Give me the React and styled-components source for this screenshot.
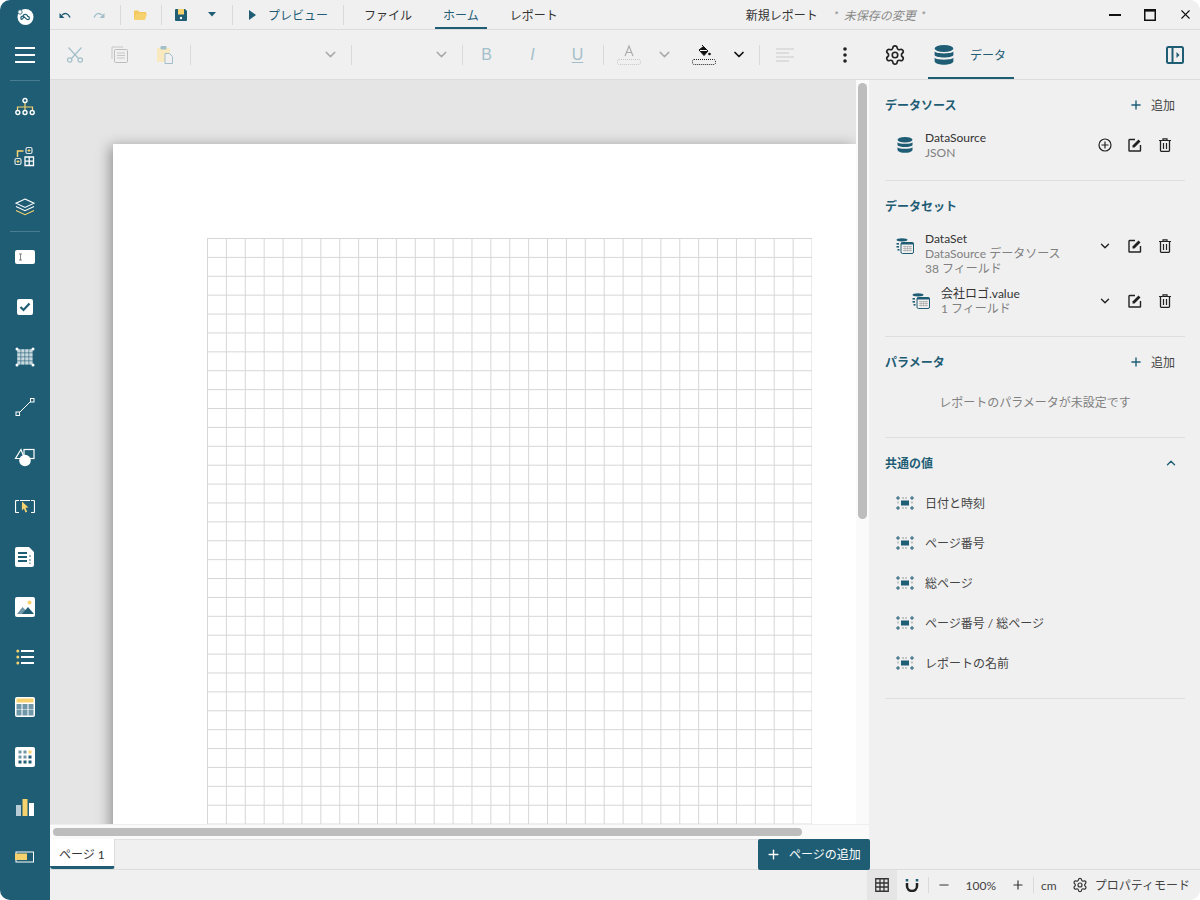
import React from "react";
import styled, { createGlobalStyle } from "styled-components";
import { Settings, Plus, Minus, X, ChevronDown, ChevronUp } from "lucide-react";

const TEAL = "#1f5d75";
const YELLOW = "#f6d26f";
const FADED = "#a3bfca";
const FONT = `Lato, "Noto Sans CJK JP", "Noto Sans", sans-serif`;

const Global = createGlobalStyle`
  html, body { margin: 0; padding: 0; background: #fff; }
  #root { width: 1200px; height: 900px; }
  * { box-sizing: border-box; }
`;

const Window = styled.div`
  width: 1200px; height: 900px; display: flex; overflow: hidden;
  border-radius: 10px; background: #f0f0f0; color: #333;
  font: 12px/15px ${FONT};
`;
const Sidebar = styled.nav`
  width: 50px; flex: none; background: ${TEAL}; display: flex; flex-direction: column;
`;
const Logo = styled.div`height: 30px; display: flex; align-items: center; justify-content: center;`;
const SideItem = styled.div`height: 50px; flex: none; display: flex; align-items: center; justify-content: center;`;
const SideRule = styled.div`
  height: 1px; flex: none; margin: ${p => p.$first ? "0 10px 1px" : "-1px 10px 0"}; background: #4a7d92;
`;
const Main = styled.div`flex: 1; min-width: 0; display: flex; flex-direction: column;`;
const TitleBar = styled.header`
  height: 30px; flex: none; display: flex; align-items: center; border-bottom: 1px solid #dcdcdc;
`;
const TitleBtn = styled.div`
  width: ${p => p.$w}px; height: 29px; flex: none; display: flex; align-items: center; justify-content: center;
`;
const Sep = styled.div`
  width: 1px; height: ${p => p.$h || 20}px; flex: none; margin-left: ${p => p.$ml || 0}px; background: #d9d9d9;
`;
const PreviewBtn = styled.div`
  margin-left: 14px; display: flex; align-items: center; gap: 11px; color: ${TEAL}; width: 96px; flex: none;
`;
const NudgedLabel = styled.span`padding-top: 2px;`;
const MenuTabs = styled.div`display: flex; gap: 15px; margin-left: 12px; height: 29px;`;
const MenuTab = styled.div`
  padding: 4px 8px 0; display: flex; align-items: center; height: 29px;
  color: ${p => p.$active ? TEAL : "#333"};
  border-bottom: 2px solid ${p => p.$active ? TEAL : "transparent"};
`;
const DocTitle = styled.div`margin-left: 180px; padding-top: 2px; color: #333; white-space: nowrap;`;
const Unsaved = styled.div`margin-left: 16px; padding-top: 1px; color: #888; font-style: italic; white-space: nowrap; word-spacing: 2.5px;`;
const WinControls = styled.div`margin-left: auto; display: flex; gap: 5px;`;

const Toolbar = styled.div`
  height: 50px; flex: none; display: flex; align-items: center; padding-left: 2px; border-bottom: 1px solid #dcdcdc;
`;
const ToolBtn = styled.div`
  width: ${p => p.$w || 45}px; margin-left: ${p => p.$ml || 0}px; height: 49px; flex: none;
  display: flex; align-items: center; justify-content: center;
`;
const Combo = styled.div`
  width: ${p => p.$w}px; height: 49px; flex: none; display: flex; align-items: center; justify-content: flex-end; padding-right: 12px;
`;
const DataTab = styled.div`
  width: 86px; height: 49px; margin-left: 11px; flex: none; display: flex; align-items: center; gap: 16px; padding: 2px 0 0 6px;
  color: ${TEAL}; border-bottom: 2px solid ${TEAL};
`;
const Body = styled.div`flex: 1; min-height: 0; display: flex;`;
const Work = styled.div`width: 819px; flex: none; display: flex; flex-direction: column; position: relative;`;
const CanvasRow = styled.div`height: 744px; flex: none; display: flex;`;
const Canvas = styled.div`
  width: 806px; flex: none; overflow: hidden; background: #e5e5e5; padding: 64px 0 0 63px;
`;
const Page = styled.div`
  width: 743px; height: 800px; background: #fff; padding: 94px 0 0 94px;
  box-shadow: -3px 2px 13px rgba(0,0,0,.36);
`;
const Grid = styled.div`
  width: 605px; height: 700px;
  background-image:
    linear-gradient(to right, #d6d6d6 1px, transparent 1px),
    linear-gradient(to bottom, #d6d6d6 1px, transparent 1px);
  background-size: 18.9px 18.9px;
`;
const VTrack = styled.div`flex: 1; background: #fafafa; padding: 3px 2px 0;`;
const VThumb = styled.div`height: 436px; border-radius: 5px; background: #bdbdbd;`;
const HTrack = styled.div`height: 15px; flex: none; background: #fafafa; padding: 3px 0 0 3px; border-top: 1px solid #eee;`;
const HThumb = styled.div`width: 749px; height: 8px; border-radius: 4px; background: #bdbdbd;`;
const TabStrip = styled.div`
  flex: 1; display: flex; justify-content: space-between; border-top: 1px solid #e0e0e0; 
`;
const PageTab = styled.div`
  width: 65px; height: 30px; margin-top: -1px; padding: 3px 0 0 9px; display: flex; align-items: center;
  background: #fff; color: #333; border-bottom: 3px solid ${TEAL}; border-right: 1px solid #ddd;
  border-radius: 0 0 3px 3px; white-space: pre;
`;
const AddPage = styled.div`
  width: 112px; height: 31px; margin: -1px -1px 0 0; display: flex; align-items: center; gap: 8px; padding-left: 8px;
  background: ${TEAL}; color: #fff; border-radius: 2px; position: relative; z-index: 1;
`;
const Panel = styled.aside`flex: 1; min-width: 0; padding: 0 15px 0 16px;`;
const Section = styled.section`
  padding-bottom: ${p => p.$pb ?? 20}px; border-bottom: 1px solid #dedede;
`;
const SectionHead = styled.div`height: 50px; display: flex; align-items: center; justify-content: space-between;`;
const SectionTitle = styled.h3`margin: 0; font: 700 12px/15px ${FONT}; color: ${TEAL};`;
const AddBtn = styled.div`display: flex; align-items: center; gap: 8px; padding-right: 10px; color: #444;`;
const Chevron = styled.div`padding-right: 7px; display: flex;`;
const TreeItem = styled.div`
  display: flex; align-items: flex-start; padding-left: ${p => p.$indent || 0}px; margin-top: ${p => p.$mt || 0}px;
`;
const ItemIcon = styled.div`
  width: 40px; height: 30px; flex: none; display: flex; align-items: center; justify-content: center;
`;
const ItemText = styled.div`flex: 1; min-width: 0;`;
const Name = styled.div`color: #333;`;
const Meta = styled.div`color: #808080;`;
const Actions = styled.div`display: flex; padding-right: 5px; height: 30px;`;
const Action = styled.div`width: 30px; height: 30px; display: flex; align-items: center; justify-content: center;`;
const EmptyNote = styled.div`height: 30px; display: flex; align-items: center; justify-content: center; color: #808080;`;
const ValueList = styled.div`margin-top: -5px;`;
const ValueRow = styled.div`height: 40px; display: flex; align-items: center; color: #444;`;
const StatusBar = styled.footer`
  height: 31px; flex: none; display: flex; align-items: center; justify-content: flex-end; padding-right: 10px;
  border-top: 1px solid #dcdcdc; color: #444;
`;
const StatusBtn = styled.div`
  width: ${p => p.$w || 30}px; height: 30px; flex: none; display: flex; align-items: center; justify-content: center;
  margin-left: ${p => p.$ml || 0}px; background: ${p => p.$on ? "#e5e5e5" : "transparent"};
`;
const StatusText = styled.div`flex: none; margin-left: ${p => p.$ml || 0}px; white-space: nowrap;`;
const Glyph = styled.span`
  font: ${p => p.$i ? "italic 400" : "400"} 16px/18px "Liberation Sans", sans-serif;
  color: #a3bfca;
  ${p => p.$u && "text-decoration: underline; text-underline-offset: 2px;"}
`;
const Svg = styled.svg`display: block; flex: none;`;

const Ic = ({ w = 20, h = 20, children }) => <Svg width={w} height={h} viewBox={`0 0 ${w} ${h}`}>{children}</Svg>;

/* sidebar drawings */
const LogoIc = () => <Ic w={24} h={24}>
  <circle cx="12.5" cy="14" r="8" fill="#fff" />
  <circle cx="7" cy="9" r="2.200" fill="#fff" stroke={TEAL} strokeWidth=".8" />
  <path d="M8 16c-.6-2 .8-3 2-2.800.6-2.400 4.200-2.400 4.800.2 2 0 2.200 3.200 0 3.300-1.400 0-2.800-2.400-3.800-3-1 1.200-1.600 3.400-3 2.300z" fill="none" stroke={TEAL} strokeWidth="1.200" />
</Ic>;
const Burger = () => <Ic w={20} h={16}>
  <rect y="0" width="20" height="2" fill="#fff" /><rect y="7" width="20" height="2" fill="#fff" /><rect y="14" width="20" height="2" fill="#fff" />
</Ic>;
const Tree = () => <Ic w={20} h={20}>
  <path d="M10 5v5M2.500 14v-4h15v4M10 10v4" fill="none" stroke={YELLOW} strokeWidth="1.200" />
  <g fill={TEAL} stroke="#fff" strokeWidth="1.400">
    <circle cx="10" cy="3.500" r="2" /><circle cx="2.800" cy="15.500" r="2" /><circle cx="10" cy="15.500" r="2" /><circle cx="17.200" cy="15.500" r="2" />
  </g>
</Ic>;
const Compose = () => <Ic w={22} h={22}>
  <path d="M3.500 11V5h6" fill="none" stroke={YELLOW} strokeWidth="1.500" />
  <rect x="12" y="1.500" width="6" height="6" rx="1.500" fill="none" stroke="#dfe8ec" strokeWidth="1.200" />
  <path d="M15 3v3M13.500 4.500h3" stroke={YELLOW} strokeWidth="1" />
  <rect x="1" y="12.500" width="6" height="6" rx="1.500" fill="none" stroke="#dfe8ec" strokeWidth="1.200" />
  <path d="M4 14v3M2.500 15.500h3" stroke={YELLOW} strokeWidth="1" />
  <path d="M11 11h8.500v8.500H11zM15.200 11v8.500M11 15.200h8.500" fill="none" stroke="#fff" strokeWidth="1.300" />
</Ic>;
const Layers = () => <Ic w={20} h={18}>
  <path d="M10 1l9 4.200-9 4.200-9-4.200z" fill="none" stroke="#fff" strokeWidth="1.100" />
  <path d="M1 8.500l9 4.200 9-4.200" fill="none" stroke="#fff" strokeWidth="1.100" />
  <path d="M1 12.500l9 4.200 9-4.200" fill="none" stroke={YELLOW} strokeWidth="1.100" />
</Ic>;
const TextBox = () => <Ic w={20} h={14}>
  <rect width="20" height="14" rx="2" fill="#fff" />
  <path d="M4 4h3M4 10h3M5.500 4v6" stroke="#777" strokeWidth=".9" fill="none" />
</Ic>;
const Check = () => <Ic w={16} h={16}>
  <rect width="16" height="16" rx="2" fill="#fff" />
  <path d="M3.500 8l3 3 6-6.500" fill="none" stroke={TEAL} strokeWidth="2.200" />
</Ic>;
const TableSel = () => {
  const c = [];
  for (let x = 0; x < 4; x++) for (let y = 0; y < 4; y++) c.push(<rect key={`${x}${y}`} x={2.200 + x * 4} y={2.200 + y * 4} width="3.400" height="3.400" fill="#c9d9df" />);
  return <Ic w={20} h={20}>{c}
    {[[2, 2], [18, 2], [2, 18], [18, 18]].map(([x, y]) => <circle key={x + "" + y} cx={x} cy={y} r="1.500" fill="#fff" />)}
  </Ic>;
};
const LineIc = () => <Ic w={20} h={20}>
  <path d="M3 17L17 3" stroke="#fff" strokeWidth="1" />
  <rect x="1" y="15" width="3.500" height="3.500" fill={TEAL} stroke="#fff" />
  <rect x="15.500" y="1.500" width="3.500" height="3.500" fill={TEAL} stroke="#fff" />
</Ic>;
const Shapes = () => <Ic w={22} h={20}>
  <path d="M7 2.500L1.500 11.500h9z" fill="none" stroke="#fff" strokeWidth="1.200" />
  <rect x="10" y="2.500" width="10" height="9" fill="none" stroke="#fff" strokeWidth="1.200" />
  <circle cx="11" cy="13.500" r="5.800" fill="#fff" />
</Ic>;
const ClickArea = () => <Ic w={20} h={16}>
  <path d="M4 1.500H1.500q-1 0-1 1v10q0 1 1 1H4M16 1.500h2.500q1 0 1 1v10q0 1-1 1H16M5 1.500h10" fill="none" stroke="#fff" strokeWidth="1.200" />
  <path d="M7 2.500l6.500 6-3 .3 1.700 4-1.700.7-1.600-4-2 2z" fill={YELLOW} />
</Ic>;
const Doc = () => <Ic w={20} h={20}>
  <path d="M2 0h12l5 5v13a2 2 0 0 1-2 2H2a2 2 0 0 1-2-2V2a2 2 0 0 1 2-2z" fill="#fff" />
  <path d="M3 6h9M3 10h9M3 14h9" stroke={TEAL} strokeWidth="2" />
  <path d="M15 8v2M15 12v2M15 15.500v1.500" stroke="#9db6c1" strokeWidth="2" />
</Ic>;
const Picture = () => <Ic w={20} h={20}>
  <rect width="20" height="20" rx="2" fill="#fff" />
  <circle cx="14.500" cy="5.500" r="2" fill={YELLOW} />
  <path d="M2 17l5.500-7 4 4-2.500 3z" fill="#6f97a8" />
  <path d="M7 17l6-7 6 7z" fill={TEAL} />
</Ic>;
const ListIc = () => <Ic w={18} h={16}>
  {[2, 8, 14].map(y => <g key={y}><circle cx="1.800" cy={y} r="1.500" fill={YELLOW} /><rect x="5" y={y - 1} width="13" height="2" fill="#fff" /></g>)}
</Ic>;
const TableIc = () => <Ic w={20} h={20}>
  <rect width="20" height="20" rx="2" fill="#fff" />
  <rect x="1.500" y="1.500" width="17" height="4" fill={YELLOW} />
  {[1.500, 7.500, 13.500].map(x => [7, 13].map(y => <rect key={x + "-" + y} x={x} y={y} width="5" height="5.500" fill="#6f97a8" />))}
</Ic>;
const Dots = () => <Ic w={20} h={20}>
  <rect width="20" height="20" rx="2" fill="#fff" />
  {[3.500, 8.500, 13.500].map((x, i) => [3.500, 8.500, 13.500].map((y, j) => (
    <rect key={x + "-" + y} x={x} y={y} width="3" height="3"
      fill={j === 0 && i === 2 ? YELLOW : j === 2 || (j === 1 && i === 2) ? TEAL : "#6f97a8"} />
  )))}
</Ic>;
const Bars = () => <Ic w={20} h={20}>
  <rect x="1" y="8" width="5" height="11" fill="#b8ccd5" />
  <rect x="7.500" y="2" width="5" height="17" fill={YELLOW} />
  <rect x="14" y="6" width="5" height="13" fill="#fff" />
</Ic>;
const Strip = () => <Ic w={20} h={12}>
  <rect x="1" y="1" width="17.500" height="10" fill="none" stroke="#fff" strokeWidth="1" />
  <rect y="2.500" width="12" height="6.500" fill={YELLOW} />
</Ic>;

/* title bar drawings */
const Undo = ({ c = TEAL, flip }) => <Ic w={12} h={10}>
  <g transform={flip ? "translate(12 0) scale(-1 1)" : undefined}>
    <path d="M3 5c3-2.500 6-2 8 2.500" fill="none" stroke={c} strokeWidth="1.500" />
    <path d="M0.500 3v5h5z" fill={c} />
  </g>
</Ic>;
const Folder = () => <Ic w={14} h={12}>
  <path d="M1 11V1.500h4l1.500 1.500H13v2H4z" fill="#f3c85f" />
  <path d="M1 11l2.500-6.500H14L12 11z" fill={YELLOW} />
</Ic>;
const Save = () => <Ic w={12} h={12}>
  <path d="M0 1a1 1 0 0 1 1-1h9l2 2v9a1 1 0 0 1-1 1H1a1 1 0 0 1-1-1z" fill={TEAL} />
  <rect x="3" y="0" width="6" height="5.500" fill={YELLOW} />
  <circle cx="6" cy="9" r="1.200" fill="#fff" />
</Ic>;
const Caret = () => <Ic w={8} h={5}><path d="M0 0h8L4 4.500z" fill={TEAL} /></Ic>;
const Play = () => <Ic w={10} h={10}><path d="M2 0l7 5-7 5z" fill={TEAL} /></Ic>;
const WinMin = () => <Ic w={12} h={12}><rect y="5" width="12" height="2" fill="#111" /></Ic>;
const WinMax = () => <Ic w={12} h={12}><path d="M.75 1.500h10.500v9.750H.75z" fill="none" stroke="#111" strokeWidth="1.500" /><rect x="0" y="0" width="12" height="2.500" fill="#111" /></Ic>;

/* toolbar drawings */
const Cut = () => <Ic w={18} h={18}>
  <path d="M2.500 1.500l10 11M15.500 1.500l-10 11" stroke="#a3bfca" strokeWidth="1.200" fill="none" />
  <circle cx="3.700" cy="14" r="2.200" fill="none" stroke="#a3bfca" strokeWidth="1.200" />
  <circle cx="14.300" cy="14" r="2.200" fill="none" stroke="#a3bfca" strokeWidth="1.200" />
</Ic>;
const Copy = () => <Ic w={18} h={18}>
  <path d="M1 13V1h11" fill="none" stroke="#c6c6c6" strokeWidth="1" />
  <rect x="3.500" y="3.500" width="13" height="13" rx="1" fill="none" stroke="#bdbdbd" strokeWidth="1" />
  <path d="M6 7h8M6 9.500h8M6 12h8" stroke="#c6c6c6" strokeWidth="1" />
</Ic>;
const Paste = () => <Ic w={18} h={20}>
  <rect x="1" y="3" width="13" height="14" rx="1" fill="#f8e9bf" />
  <rect x="4.500" y="1" width="6" height="3.500" rx="1" fill="#a3bfca" />
  <path d="M9 8.500h4.500l3 3v7H9z" fill="#f0f0f0" stroke="#a3bfca" strokeWidth="1" />
</Ic>;
const FontColor = () => <Ic w={24} h={22}>
  <path d="M8 12l4-10 4 10M9.500 8.500h5" fill="none" stroke="#aaa" strokeWidth="1.100" />
  <rect x=".5" y="15.500" width="23" height="5" rx="1.500" fill="none" stroke="#c6c6c6" strokeDasharray="1 1" />
</Ic>;
const Fill = () => <Ic w={24} h={22}>
  <path d="M10 1l1.500 1.500M7 6l4.500-3.500L16 7l-4 4.500z" fill="#111" stroke="#111" strokeWidth="1" />
  <path d="M8 6.500h7" stroke="#f0f0f0" strokeWidth="1" />
  <circle cx="17.500" cy="10" r="1.300" fill="#111" />
  <rect x=".5" y="15.500" width="23" height="5" rx="1.500" fill="none" stroke="#222" strokeDasharray="1 1" />
</Ic>;
const Align = () => <Ic w={18} h={14}>
  <path d="M0 1h18M0 5h13M0 9h18M0 13h13" stroke="#c9c9c9" strokeWidth="1" />
</Ic>;
const More = () => <Ic w={4} h={16}>
  <circle cx="2" cy="2" r="1.800" fill="#222" /><circle cx="2" cy="8" r="1.800" fill="#222" /><circle cx="2" cy="14" r="1.800" fill="#222" />
</Ic>;
const Db = ({ s = 16 }) => <Svg width={s} height={s} viewBox="0 0 16 16">
  <ellipse cx="8" cy="2.800" rx="7.500" ry="2.800" fill={TEAL} />
  <path d="M.5 5.200c1.500 2 13.500 2 15 0v3c-1.500 2.400-13.500 2.400-15 0z" fill={TEAL} />
  <path d="M.5 10.200c1.500 2 13.500 2 15 0v3c-1.500 3.400-13.500 3.400-15 0z" fill={TEAL} />
</Svg>;
const PanelToggle = () => <Ic w={18} h={18}>
  <rect x="1" y="1" width="16" height="16" rx="1.500" fill="none" stroke={TEAL} strokeWidth="2" />
  <path d="M6.500 1v16" stroke={TEAL} strokeWidth="2" />
  <path d="M10.500 6l3 3-3 3z" fill={TEAL} />
</Ic>;

/* panel drawings */
const AddCircle = () => <Ic w={14} h={14}>
  <circle cx="7" cy="7" r="6" fill="none" stroke="#222" strokeWidth="1.200" />
  <path d="M7 3.500v7M3.500 7h7" stroke="#222" strokeWidth="1.200" />
</Ic>;
const Edit = () => <Ic w={14} h={14}>
  <path d="M7 1.500H1.500a.5.5 0 0 0-.5.5v10.500a.5.5 0 0 0 .5.5H12a.5.5 0 0 0 .5-.5V7" fill="none" stroke="#222" strokeWidth="1.400" />
  <path d="M4.500 9.500V7.500L10.500 1.500l2 2L6.500 9.500z" fill="#222" />
</Ic>;
const Trash = () => <Ic w={12} h={14}>
  <path d="M0 2.500h12M4 2V.8h4V2" fill="none" stroke="#222" strokeWidth="1.200" />
  <path d="M1.500 2.500v10a.8.8 0 0 0 .8.8h7.400a.8.8 0 0 0 .8-.8v-10" fill="none" stroke="#222" strokeWidth="1.300" />
  <path d="M4.500 5v6M7.500 5v6" stroke="#222" strokeWidth="1.200" />
</Ic>;
const DataSetIc = () => <Ic w={18} h={16}>
  <ellipse cx="6" cy="1.800" rx="5.500" ry="1.600" fill={TEAL} />
  <rect x=".5" y="5" width="2.500" height="1.600" fill={TEAL} />
  <rect x=".5" y="8" width="2.500" height="1.600" fill={TEAL} />
  <rect x="1.500" y="11" width="2" height="1.600" fill={TEAL} />
  <rect x="5" y="4.500" width="12.500" height="11" rx="1.500" fill="#f0f0f0" stroke={TEAL} strokeWidth="1" />
  <rect x="5" y="4.500" width="12.500" height="2" fill={TEAL} />
  <path d="M7 8.500h9M7 10.500h9M7 12.500h9M9 8v5.500M11.500 8v5.500M14 8v5.500" stroke="#a9a9a9" strokeWidth=".7" />
</Ic>;
const ValueIc = () => <Ic w={18} h={14}>
  <path d="M2 0v4M0 2h4M16 0v4M14 2h4M2 10v4M0 12h4M16 10v4M14 12h4" stroke={TEAL} strokeWidth="1" />
  <path d="M6 2h6M6 12h6M2 5.500v3M16 5.500v3" stroke="#999" strokeWidth="1" strokeDasharray="2 1" />
  <rect x="5" y="4.500" width="8" height="5" fill={TEAL} />
</Ic>;

/* status drawings */
const GridIc = () => <Ic w={14} h={14}>
  <path d="M.75.75h12.500v12.500H.75zM5 .75v12.500M9 .75v12.500M.75 5h12.500M.75 9h12.500" fill="none" stroke="#333" strokeWidth="1.300" />
</Ic>;
const Magnet = () => <Ic w={14} h={14}>
  <path d="M2 5v3a5 5 0 0 0 10 0V5" fill="none" stroke="#222" strokeWidth="2.500" />
  <path d="M.75 1h2.500v2.500H.75zM10.750 1h2.500v2.500h-2.500z" fill={TEAL} />
</Ic>;

const sideItems = [Tree, Compose, Layers];
const sideItems2 = [TextBox, Check, TableSel, LineIc, Shapes, ClickArea, Doc, Picture, ListIc, TableIc, Dots, Bars, Strip];

const DataActions = ({ first }) => (
  <Actions>
    <Action>{first}</Action>
    <Action><Edit /></Action>
    <Action><Trash /></Action>
  </Actions>
);
const Down = () => <ChevronDown size={14} strokeWidth={2.4} color="#222" />;
const Add = () => (
  <AddBtn><Plus size={14} strokeWidth={2.4} color={TEAL} />追加</AddBtn>
);

export default function App() {
  return (
    <>
      <Global />
      <Window>
        <Sidebar>
          <Logo><LogoIc /></Logo>
          <SideItem><Burger /></SideItem>
          <SideRule $first />
          {sideItems.map((C, i) => <SideItem key={i}><C /></SideItem>)}
          <SideRule />
          {sideItems2.map((C, i) => <SideItem key={i}><C /></SideItem>)}
        </Sidebar>
        <Main>
          <TitleBar>
            <TitleBtn $w={30}><Undo /></TitleBtn>
            <TitleBtn $w={38}><Undo c={FADED} flip /></TitleBtn>
            <Sep $ml={2} />
            <TitleBtn $w={38}><Folder /></TitleBtn>
            <Sep $ml={2} />
            <TitleBtn $w={38}><Save /></TitleBtn>
            <TitleBtn $w={24}><Caret /></TitleBtn>
            <Sep $ml={8} />
            <PreviewBtn><Play /><NudgedLabel>プレビュー</NudgedLabel></PreviewBtn>
            <Sep />
            <MenuTabs>
              <MenuTab>ファイル</MenuTab>
              <MenuTab $active>ホーム</MenuTab>
              <MenuTab>レポート</MenuTab>
            </MenuTabs>
            <DocTitle>新規レポート</DocTitle>
            <Unsaved>* 未保存の変更 *</Unsaved>
            <WinControls>
              <TitleBtn $w={30}><WinMin /></TitleBtn>
              <TitleBtn $w={30}><WinMax /></TitleBtn>
              <TitleBtn $w={30}><X size={15} strokeWidth={1.8} color="#111" /></TitleBtn>
            </WinControls>
          </TitleBar>
          <Toolbar>
            <ToolBtn><Cut /></ToolBtn>
            <ToolBtn><Copy /></ToolBtn>
            <ToolBtn><Paste /></ToolBtn>
            <Sep $ml={3} />
            <Combo $w={160}><ChevronDown size={17} strokeWidth={2} color="#aaa" /></Combo>
            <Sep />
            <Combo $w={110}><ChevronDown size={17} strokeWidth={2} color="#aaa" /></Combo>
            <Sep />
            <ToolBtn $ml={1}><Glyph>B</Glyph></ToolBtn>
            <ToolBtn $ml={1}><Glyph $i>I</Glyph></ToolBtn>
            <ToolBtn><Glyph $u>U</Glyph></ToolBtn>
            <Sep $ml={3} />
            <ToolBtn $ml={2}><FontColor /></ToolBtn>
            <ToolBtn $w={26}><ChevronDown size={17} strokeWidth={2} color="#aaa" /></ToolBtn>
            <ToolBtn $w={54}><Fill /></ToolBtn>
            <ToolBtn $w={16}><ChevronDown size={17} strokeWidth={2.6} color="#111" /></ToolBtn>
            <Sep $ml={12} />
            <ToolBtn $ml={2}><Align /></ToolBtn>
            <ToolBtn $ml={16} $w={44}><More /></ToolBtn>
            <ToolBtn $ml={6} $w={44}><Settings size={22} strokeWidth={1.8} color="#222" /></ToolBtn>
            <DataTab><Db s={20} /><NudgedLabel>データ</NudgedLabel></DataTab>
            <ToolBtn $ml={138}><PanelToggle /></ToolBtn>
          </Toolbar>
          <Body>
            <Work>
              <CanvasRow>
                <Canvas>
                  <Page><Grid /></Page>
                </Canvas>
                <VTrack><VThumb /></VTrack>
              </CanvasRow>
              <HTrack><HThumb /></HTrack>
              <TabStrip>
                <PageTab>ページ 1</PageTab>
                <AddPage><Plus size={15} strokeWidth={2.2} color="#fff" />ページの追加</AddPage>
              </TabStrip>
            </Work>
            <Panel>
              <Section>
                <SectionHead><SectionTitle>データソース</SectionTitle><Add /></SectionHead>
                <TreeItem>
                  <ItemIcon><Db /></ItemIcon>
                  <ItemText><Name>DataSource</Name><Meta>JSON</Meta></ItemText>
                  <DataActions first={<AddCircle />} />
                </TreeItem>
              </Section>
              <Section>
                <SectionHead><SectionTitle>データセット</SectionTitle></SectionHead>
                <TreeItem>
                  <ItemIcon><DataSetIc /></ItemIcon>
                  <ItemText><Name>DataSet</Name><Meta>DataSource データソース</Meta><Meta>38 フィールド</Meta></ItemText>
                  <DataActions first={<Down />} />
                </TreeItem>
                <TreeItem $indent={16} $mt={10}>
                  <ItemIcon><DataSetIc /></ItemIcon>
                  <ItemText><Name>会社ロゴ.value</Name><Meta>1 フィールド</Meta></ItemText>
                  <DataActions first={<Down />} />
                </TreeItem>
              </Section>
              <Section>
                <SectionHead><SectionTitle>パラメータ</SectionTitle><Add /></SectionHead>
                <EmptyNote>レポートのパラメータが未設定です</EmptyNote>
              </Section>
              <Section $pb={15}>
                <SectionHead>
                  <SectionTitle>共通の値</SectionTitle>
                  <Chevron><ChevronUp size={14} strokeWidth={2.4} color={TEAL} /></Chevron>
                </SectionHead>
                <ValueList>
                  {["日付と時刻", "ページ番号", "総ページ", "ページ番号 / 総ページ", "レポートの名前"].map(t => (
                    <ValueRow key={t}><ItemIcon><ValueIc /></ItemIcon>{t}</ValueRow>
                  ))}
                </ValueList>
              </Section>
            </Panel>
          </Body>
          <StatusBar>
            <StatusBtn $on><GridIc /></StatusBtn>
            <StatusBtn><Magnet /></StatusBtn>
            <Sep $ml={1} $h={16} />
            <StatusBtn><Minus size={14} strokeWidth={2} color="#333" /></StatusBtn>
            <StatusText $ml={7}>100%</StatusText>
            <StatusBtn $ml={7}><Plus size={14} strokeWidth={2} color="#333" /></StatusBtn>
            <Sep $h={16} />
            <StatusText $ml={7}>cm</StatusText>
            <StatusBtn $ml={8}><Settings size={16} strokeWidth={1.8} color="#333" /></StatusBtn>
            <StatusText>プロパティモード</StatusText>
          </StatusBar>
        </Main>
      </Window>
    </>
  );
}
